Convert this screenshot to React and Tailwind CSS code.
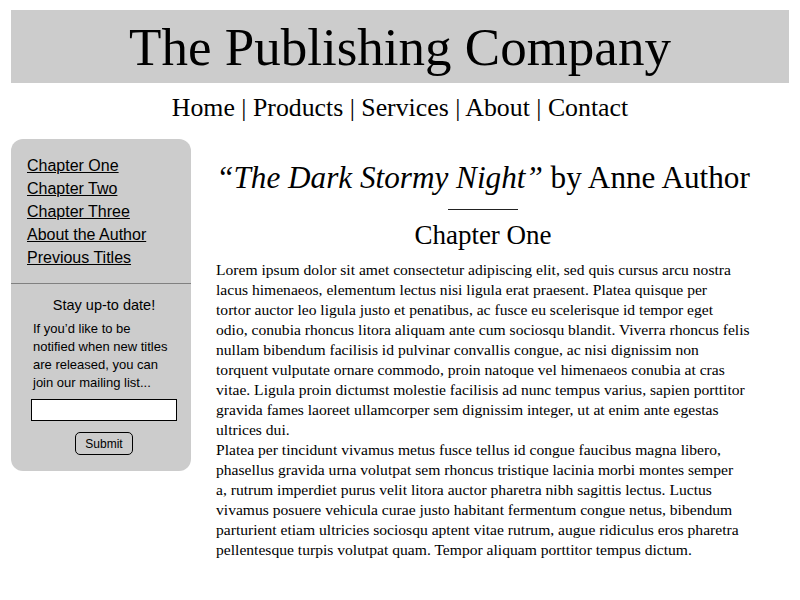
const p1 = [
  "Lorem ipsum dolor sit amet consectetur adipiscing elit, sed quis cursus arcu nostra",
  "lacus himenaeos, elementum lectus nisi ligula erat praesent. Platea quisque per",
  "tortor auctor leo ligula justo et penatibus, ac fusce eu scelerisque id tempor eget",
  "odio, conubia rhoncus litora aliquam ante cum sociosqu blandit. Viverra rhoncus felis",
  "nullam bibendum facilisis id pulvinar convallis congue, ac nisi dignissim non",
  "torquent vulputate ornare commodo, proin natoque vel himenaeos conubia at cras",
  "vitae. Ligula proin dictumst molestie facilisis ad nunc tempus varius, sapien porttitor",
  "gravida fames laoreet ullamcorper sem dignissim integer, ut at enim ante egestas",
  "ultrices dui.",
];
const p2 = [
  "Platea per tincidunt vivamus metus fusce tellus id congue faucibus magna libero,",
  "phasellus gravida urna volutpat sem rhoncus tristique lacinia morbi montes semper",
  "a, rutrum imperdiet purus velit litora auctor pharetra nibh sagittis lectus. Luctus",
  "vivamus posuere vehicula curae justo habitant fermentum congue netus, bibendum",
  "parturient etiam ultricies sociosqu aptent vitae rutrum, augue ridiculus eros pharetra",
  "pellentesque turpis volutpat quam. Tempor aliquam porttitor tempus dictum.",
];

export default function App() {
  const serif = { fontFamily: '"Liberation Serif", "DejaVu Serif", serif' };
  const sans = { fontFamily: '"Liberation Sans", Arial, sans-serif' };
  return (
    <div className="w-[800px] h-[600px] bg-white text-black overflow-hidden pt-[10px] px-[11px]">
      <header className="h-[73px] bg-[#cccccc] flex items-center justify-center" style={serif}>
        <h1 className="text-[53px] leading-none font-normal pt-[2px]">The Publishing Company</h1>
      </header>
      <nav className="flex justify-center h-[50px] items-center text-[25.8px]" style={serif}>
        Home | Products | Services | About | Contact
      </nav>
      <div className="flex items-start mt-[6px]">
        <aside className="w-[180px] bg-[#cccccc] rounded-[12px] pt-[15px] pb-[16px]" style={sans}>
          <ul className="pl-[16px] flex flex-col text-[16px] leading-[23px]">
            <li><a href="#" className="underline">Chapter One</a></li>
            <li><a href="#" className="underline">Chapter Two</a></li>
            <li><a href="#" className="underline">Chapter Three</a></li>
            <li><a href="#" className="underline">About the Author</a></li>
            <li><a href="#" className="underline">Previous Titles</a></li>
          </ul>
          <div className="mt-[14px] h-px bg-[#808080]" />
          <div className="flex flex-col items-center pt-[11px] pl-[6px]">
            <div className="text-[14.5px] leading-[20px]">Stay up-to date!</div>
            <p className="text-[13px] leading-[18px] mt-[5px] pl-[16px] w-[154px] self-start">If you’d like to be notified when new titles are released, you can join our mailing list...</p>
            <input type="text" className="mt-[7px] w-[146px] h-[22px] bg-white border border-black" />
            <button className="mt-[11px] h-[23px] w-[58px] border border-black rounded-[5px] text-[12px] bg-[#cccccc]">Submit</button>
          </div>
        </aside>
        <main className="flex-1 pl-[25px] pt-[19px]" style={serif}>
          <h2 className="text-center whitespace-nowrap text-[31.2px] leading-[40px] w-[534px]"><span className="italic">“The Dark Stormy Night”</span> by Anne Author</h2>
          <div className="ml-[232px] w-[70px] h-px bg-[#222] mt-[11px]" />
          <h3 className="text-center text-[27px] leading-[30px] mt-[10px] w-[534px]">Chapter One</h3>
          <div className="text-[15.6px] leading-[20px] mt-[10px] whitespace-nowrap">
            <p>{p1.map((l, i) => <span key={i} className="block">{l}</span>)}</p>
            <p>{p2.map((l, i) => <span key={i} className="block">{l}</span>)}</p>
          </div>
        </main>
      </div>
    </div>
  );
}
